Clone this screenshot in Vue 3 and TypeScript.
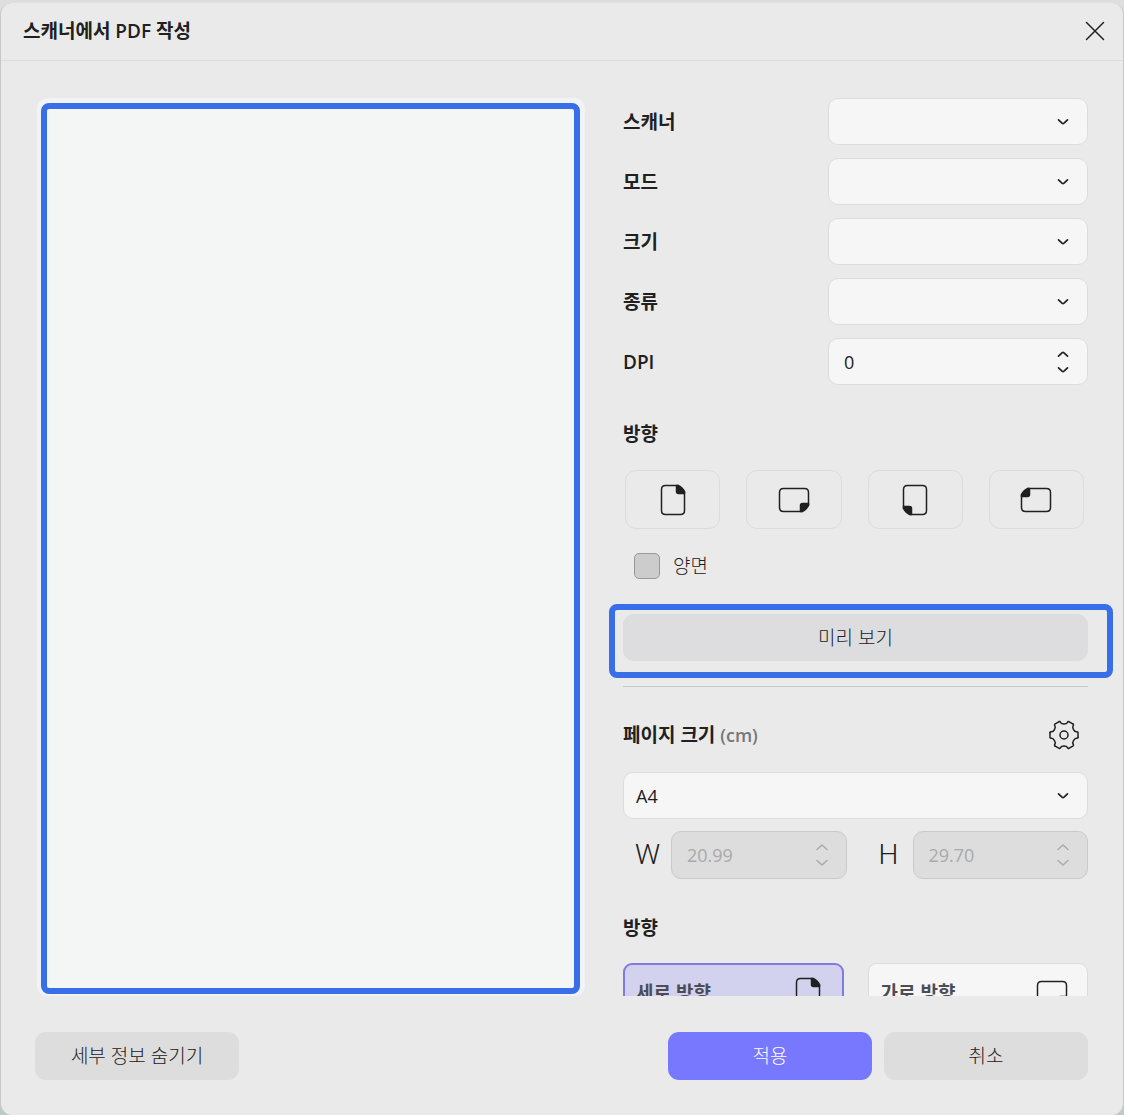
<script setup lang="ts">
import { ref } from 'vue'

interface Field {
  id: string
  label: string
}

const fields: Field[] = [
  { id: 'scanner', label: '스캐너' },
  { id: 'mode', label: '모드' },
  { id: 'size', label: '크기' },
  { id: 'kind', label: '종류' },
]

const orientations = [
  { name: '세로', angle: 0 },
  { name: '가로', angle: 90 },
  { name: '세로 뒤집기', angle: 180 },
  { name: '가로 뒤집기', angle: 270 },
]

const sheetPath = 'M5.500-14.500H-7.500Q-11.500-14.500-11.500-10.500V10.500Q-11.500 14.500-7.500 14.500H7.500Q11.500 14.500 11.500 10.500V-8.500'
const foldPath = 'M3.500-14.500V-8.500Q3.500-6.500 5.500-6.500H11.500V-8Q11-10 9-12T5-14.500Z'
const gearPath = 'M-4.800-13.400Q-3.800-13.600-3.300-12.400Q-2.600-11 0-11Q2.600-11 3.300-12.400Q3.800-13.600 4.800-13.400L9.200-10.900'
const upPath = 'M1.500 6.200 5 2.800Q6 2 7 2.800L10.500 6.200'
const downPath = 'M1.500 1.800 5 5.200Q6 6 7 5.200L10.500 1.800'

const dpi = ref('0')
const duplex = ref(false)
const pageSize = ref('A4')
const pageWidth = ref('20.99')
const pageHeight = ref('29.70')
const direction = ref<'portrait' | 'landscape'>('portrait')

function stepDpi(amount: number) {
  dpi.value = String(Math.max(0, Number(dpi.value) + amount))
}
</script>

<template>
  <main class="dialog">
    <header class="titlebar">
      <h1>스캐너에서 PDF 작성</h1>
      <button class="close" type="button" aria-label="닫기">
        <svg width="20" height="20" viewBox="0 0 20 20"><path d="M1.500 1.500 18.500 18.500M18.500 1.500 1.500 18.500" /></svg>
      </button>
    </header>

    <div class="body">
      <section class="preview" aria-label="스캔 미리 보기">
        <div class="preview-frame"></div>
      </section>

      <section class="settings">
        <div class="fields">
          <div v-for="f in fields" :key="f.id" class="row">
            <label class="strong" :for="f.id">{{ f.label }}</label>
            <div class="control">
              <select :id="f.id" class="box"><option value=""></option></select>
              <svg class="arrow" width="12" height="8" viewBox="0 0 12 8"><path :d="downPath" /></svg>
            </div>
          </div>
          <div class="row">
            <label class="strong" for="dpi">DPI</label>
            <div class="control">
              <input id="dpi" v-model="dpi" class="box spin-input" type="text" inputmode="numeric" />
              <div class="stepper">
                <button type="button" aria-label="늘리기" @click="stepDpi(1)">
                  <svg width="12" height="8" viewBox="0 0 12 8"><path :d="upPath" /></svg>
                </button>
                <button type="button" aria-label="줄이기" @click="stepDpi(-1)">
                  <svg width="12" height="8" viewBox="0 0 12 8"><path :d="downPath" /></svg>
                </button>
              </div>
            </div>
          </div>
        </div>

        <h2>방향</h2>
        <div class="orientations">
          <button v-for="o in orientations" :key="o.angle" type="button" :aria-label="o.name">
            <svg width="32" height="32" viewBox="-16 -16 32 32">
              <g :transform="`rotate(${o.angle})`">
                <path :d="sheetPath" />
                <path class="fold" :d="foldPath" />
              </g>
            </svg>
          </button>
        </div>

        <label class="duplex"><input v-model="duplex" type="checkbox" />양면</label>

        <div class="preview-action">
          <button class="btn" type="button">미리 보기</button>
        </div>
        <hr />

        <div class="page-head">
          <h2><label for="page-size">페이지 크기</label> <span>(cm)</span></h2>
          <button type="button" aria-label="페이지 크기 설정">
            <svg width="30" height="30" viewBox="-15 -15 30 30">
              <circle r="4" />
              <path v-for="n in 6" :key="n" :d="gearPath" :transform="`rotate(${n * 60})`" />
            </svg>
          </button>
        </div>

        <div class="control">
          <select id="page-size" v-model="pageSize" class="box">
            <option>A4</option>
            <option>A3</option>
            <option>B5</option>
          </select>
          <svg class="arrow" width="12" height="8" viewBox="0 0 12 8"><path :d="downPath" /></svg>
        </div>

        <div class="dimensions">
          <label for="page-w">W</label>
          <div class="control">
            <input id="page-w" v-model="pageWidth" class="box spin-input" type="text" disabled />
            <div class="stepper muted">
              <button type="button" aria-label="너비 늘리기" disabled>
                <svg width="12" height="8" viewBox="0 0 12 8"><path d="M1 6.500 6 2 11 6.500" /></svg>
              </button>
              <button type="button" aria-label="너비 줄이기" disabled>
                <svg width="12" height="8" viewBox="0 0 12 8"><path d="M1 1.500 6 6 11 1.500" /></svg>
              </button>
            </div>
          </div>
          <label class="height-label" for="page-h">H</label>
          <div class="control">
            <input id="page-h" v-model="pageHeight" class="box spin-input" type="text" disabled />
            <div class="stepper muted">
              <button type="button" aria-label="높이 늘리기" disabled>
                <svg width="12" height="8" viewBox="0 0 12 8"><path d="M1 6.500 6 2 11 6.500" /></svg>
              </button>
              <button type="button" aria-label="높이 줄이기" disabled>
                <svg width="12" height="8" viewBox="0 0 12 8"><path d="M1 1.500 6 6 11 1.500" /></svg>
              </button>
            </div>
          </div>
        </div>

        <h2 class="direction-title">방향</h2>
        <div class="directions">
          <button type="button" :class="{ active: direction === 'portrait' }" @click="direction = 'portrait'">
            세로 방향
            <svg width="32" height="32" viewBox="-16 -16 32 32">
              <path :d="sheetPath" />
              <path class="fold" :d="foldPath" />
            </svg>
          </button>
          <button type="button" :class="{ active: direction === 'landscape' }" @click="direction = 'landscape'">
            가로 방향
            <svg width="32" height="32" viewBox="-16 -16 32 32">
              <g transform="rotate(90)">
                <path :d="sheetPath" />
                <path class="fold" :d="foldPath" />
              </g>
            </svg>
          </button>
        </div>
      </section>
    </div>

    <footer class="footer">
      <button class="btn" type="button">세부 정보 숨기기</button>
      <div class="footer-actions">
        <button class="btn primary" type="button">적용</button>
        <button class="btn" type="button">취소</button>
      </div>
    </footer>
  </main>
</template>

<style>
body {
  margin: 0;
  background: linear-gradient(to bottom, #dedede 50%, #bccbc8 50%);
}
#app {
  box-sizing: border-box;
  height: 100vh;
  padding-top: 3px;
}
</style>

<style scoped>
.dialog,
.dialog * {
  box-sizing: border-box;
}
.dialog {
  display: flex;
  flex-direction: column;
  height: 100%;
  overflow: hidden;
  border: solid #c6c8c8;
  border-width: 0 1px;
  border-radius: 12px;
  background: #eaeaea;
  color: #202020;
  font: 19px/24px 'Open Sans', 'Noto Sans CJK KR', sans-serif;
}
button,
input,
select {
  margin: 0;
  padding: 0;
  font: inherit;
  color: inherit;
}
button {
  border: 0;
  background: none;
}
svg {
  display: block;
  fill: none;
  stroke: #202020;
  stroke-width: 1.5;
  stroke-linecap: round;
  stroke-linejoin: round;
}
.fold {
  fill: #202020;
}
h1,
h2 {
  margin: 0;
  font-size: 19px;
  line-height: 24px;
  font-weight: 600;
}
.strong {
  font-weight: 600;
}
.titlebar {
  display: flex;
  align-items: center;
  justify-content: space-between;
  flex: none;
  height: 58px;
  padding: 0 18px 2px 22px;
  border-bottom: 1px solid #dddddd;
}
.body {
  display: grid;
  grid-template-columns: minmax(0, 1fr) 524px;
  flex: 1;
  min-height: 0;
  padding-top: 37px;
}
.preview {
  display: flex;
  margin: 0 14px 0 36px;
  padding: 5px 5px 2px 4px;
  border-radius: 10px;
  background: #f1f3f5;
}
.preview-frame {
  flex: 1;
  border: 6px solid #386fe8;
  border-radius: 8px;
  background: #f4f6f6;
}
.settings {
  overflow: hidden;
  padding: 0 35px 0 24px;
}
.fields {
  display: grid;
  gap: 13px;
  margin-bottom: 37px;
}
.row {
  display: grid;
  grid-template-columns: 1fr 260px;
  align-items: center;
}
.control {
  position: relative;
}
.box {
  display: block;
  width: 100%;
  height: 47px;
  padding: 0 40px 0 12px;
  border: 1px solid #dddddd;
  border-radius: 10px;
  outline: 0;
  appearance: none;
  background: #f6f6f6;
  font-size: 18px;
}
.spin-input {
  padding-left: 15px;
}
.arrow {
  position: absolute;
  top: 20px;
  right: 19px;
  pointer-events: none;
  stroke-width: 1.7;
}
.stepper {
  position: absolute;
  top: 8px;
  right: 19px;
  display: grid;
}
.stepper button {
  display: grid;
  place-items: center;
  height: 16px;
}
.stepper svg {
  stroke-width: 1.7;
}
.orientations {
  display: grid;
  grid-template-columns: repeat(4, 1fr);
  gap: 26px;
  margin: 24px 4px 24px 2px;
}
.orientations button {
  display: grid;
  place-items: center;
  height: 59px;
  border: 1px solid #dcdcdc;
  border-radius: 11px;
}
.duplex {
  display: flex;
  align-items: center;
  width: max-content;
  height: 26px;
  margin-left: 11px;
  font-weight: 300;
}
.duplex input {
  width: 26px;
  height: 26px;
  margin-right: 13px;
  border: 1px solid #999999;
  border-radius: 5px;
  appearance: none;
  background: #cccccc;
}
.btn {
  height: 48px;
  border-radius: 11px;
  background: #dddddd;
  font-weight: 300;
}
.preview-action {
  display: flex;
  margin: 25px -25px 8px -14px;
  padding: 4px 19px 11px 8px;
  border: 6px solid #386fe8;
  border-radius: 8px;
}
.preview-action .btn {
  flex: 1;
  height: 47px;
  background: #dddddf;
}
hr {
  height: 1px;
  margin: 0;
  border: 0;
  background: #c8c8c8;
}
.page-head {
  display: flex;
  align-items: center;
  justify-content: space-between;
  height: 30px;
  margin: 33px 9px 22px 0;
}
.page-head span {
  color: #777777;
  font-size: 18px;
}
.dimensions {
  display: grid;
  grid-template-columns: 48px 1fr 66px 1fr;
  align-items: center;
  margin-top: 12px;
}
.dimensions label {
  padding-left: 12px;
  font-family: Roboto, sans-serif;
  font-size: 28px;
  font-weight: 300;
}
.dimensions .height-label {
  padding-left: 32px;
}
.dimensions .box {
  height: 48px;
  border-color: #cacaca;
  background: #dddddd;
  color: #aaaaaa;
}
.muted svg {
  stroke: #aaaaaa;
  stroke-width: 1.5;
}
.direction-title {
  margin: 37px 0 23px;
}
.directions {
  display: grid;
  grid-template-columns: 1fr 1fr;
  gap: 24px;
}
.directions button {
  display: flex;
  align-items: center;
  justify-content: space-between;
  height: 60px;
  padding: 0 19px 0 12px;
  border: 1px solid #dddddd;
  border-radius: 9px;
  background: #f6f6f7;
  color: #4c4c55;
  font-weight: 600;
}
.directions .active {
  padding: 0 18px 0 11px;
  border: 2px solid #7f7be0;
  background: #d2d2ef;
}
.footer {
  display: flex;
  justify-content: space-between;
  flex: none;
  padding: 36px 35px 35px 34px;
}
.footer .btn {
  width: 204px;
}
.footer-actions {
  display: flex;
  gap: 12px;
}
.footer .primary {
  background: #7878ff;
  color: #ffffff;
}
</style>
